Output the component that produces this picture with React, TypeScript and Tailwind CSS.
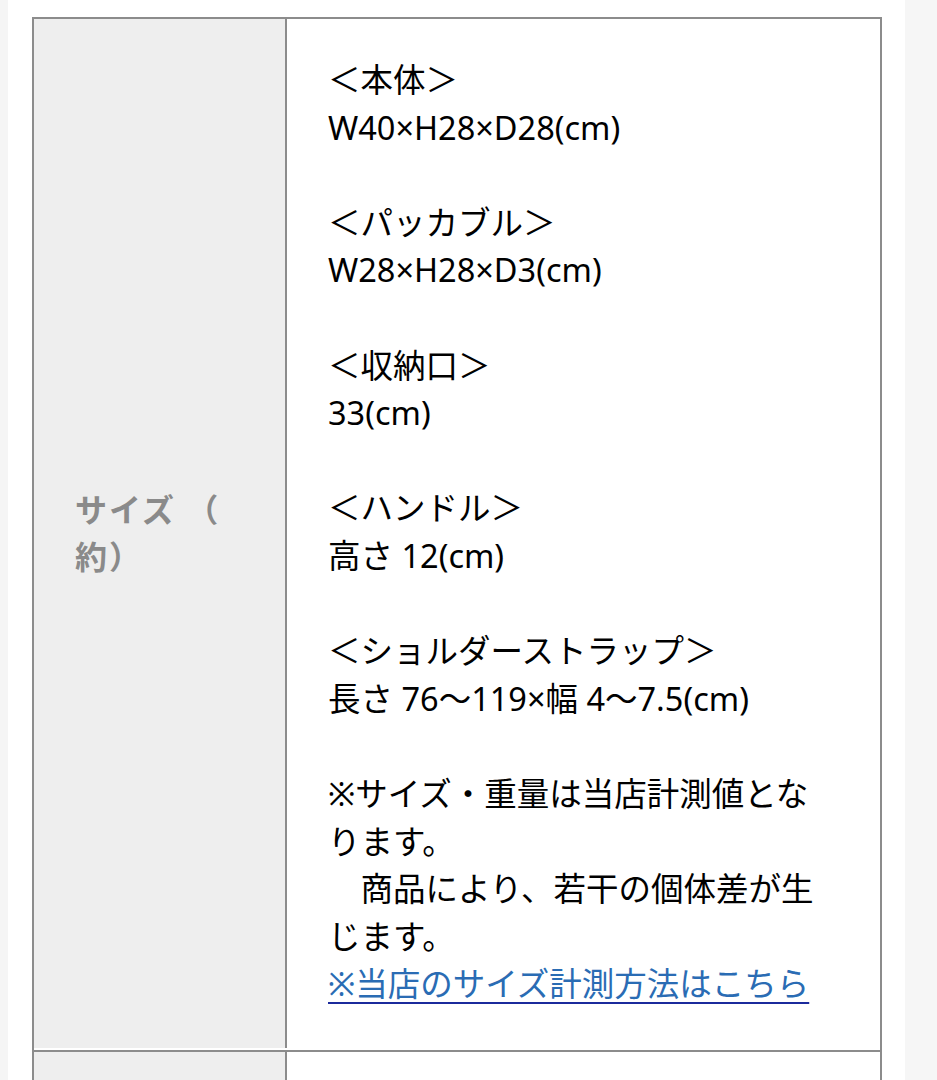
import React from "react";

const font = { fontFamily: '"Noto Sans", "Noto Sans CJK JP", sans-serif' };

type Block = string[];

const blocks: Block[] = [
  ["＜本体＞", "W40×H28×D28(cm)"],
  ["＜パッカブル＞", "W28×H28×D3(cm)"],
  ["＜収納口＞", "33(cm)"],
  ["＜ハンドル＞", "高さ 12(cm)"],
  ["＜ショルダーストラップ＞", "長さ 76〜119×幅 4〜7.5(cm)"],
];

export default function App() {
  return (
    <div className="flex h-[1080px] w-[937px] overflow-hidden bg-white text-black" style={font}>
      <div className="w-[8px] shrink-0 bg-[#f5f5f5]" />

      <main className="flex-1 pl-[24px] pt-[17px]">
        <div className="w-[850px] border-x-2 border-t-2 border-[#8c8c8c]">
          {/* サイズ row */}
          <div className="flex">
            <div className="flex w-[253px] shrink-0 items-center border-r-2 border-[#8c8c8c] bg-[#eeeeee] pl-[41px] pr-[20px]">
              <p className="text-[32px] font-bold leading-[47.6px] tracking-[2px] text-[#8a8a8a]">
                サイズ （
                <br />
                約）
              </p>
            </div>
            <div className="ml-px flex-1 pb-[40px] pl-[40px] pr-[52px] pt-[37px] text-[32.5px] leading-[47.6px]">
              {blocks.map((b, i) => (
                <div key={i}>
                  {b.map((line) => (
                    <p key={line}>{line}</p>
                  ))}
                  <p>&nbsp;</p>
                </div>
              ))}
              <p>※サイズ・重量は当店計測値となります。</p>
              <p>　商品により、若干の個体差が生じます。</p>
              <a
                href="#"
                className="text-[#2a6cb4] underline decoration-[#1b2a9c] decoration-2 underline-offset-[6px]"
              >
                ※当店のサイズ計測方法はこちら
              </a>
            </div>
          </div>

          {/* next row */}
          <div className="mt-[2px] flex h-[40px] border-t-2 border-[#8c8c8c]">
            <div className="w-[253px] shrink-0 border-r-2 border-[#8c8c8c] bg-[#eeeeee]" />
            <div className="ml-px flex-1" />
          </div>
        </div>
      </main>

      <div className="w-[32px] shrink-0 bg-[#f6f6f6]" />
    </div>
  );
}
